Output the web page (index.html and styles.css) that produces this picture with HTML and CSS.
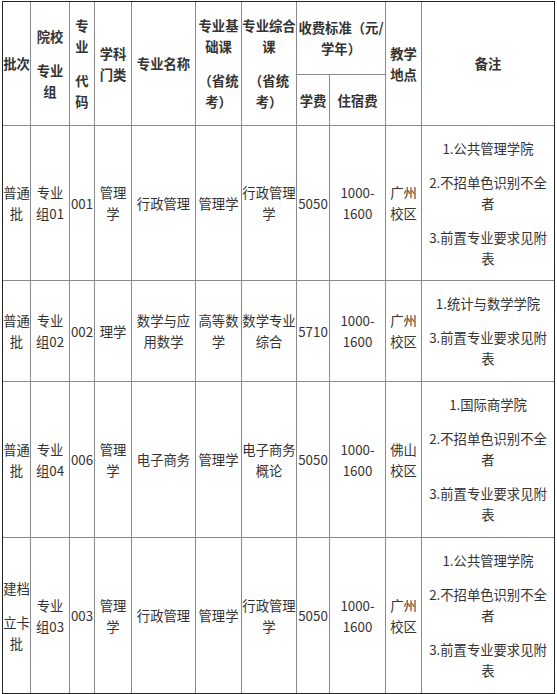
FILE: index.html
```html
<!DOCTYPE html>
<html lang="zh-CN">
<head>
<meta charset="utf-8">
<title>专业组</title>
<link rel="stylesheet" href="styles.css">
</head>
<body>
<div class="wrap">
<table class="plan">
  <colgroup>
    <col class="c1"><col class="c2"><col class="c3"><col class="c4"><col class="c5"><col class="c6"><col class="c7"><col class="c8"><col class="c9"><col class="c10"><col class="c11">
  </colgroup>
  <thead>
    <tr class="h1">
      <th rowspan="2">批次</th>
      <th rowspan="2"><p>院校</p><p>专业组</p></th>
      <th rowspan="2"><p>专业</p><p>代码</p></th>
      <th rowspan="2">学科门类</th>
      <th rowspan="2">专业名称</th>
      <th rowspan="2"><p>专业基础课</p><p>（省统考）</p></th>
      <th rowspan="2"><p>专业综合课</p><p>（省统考）</p></th>
      <th colspan="2">收费标准（元/学年）</th>
      <th rowspan="2">教学地点</th>
      <th rowspan="2" class="last">备注</th>
    </tr>
    <tr class="h2">
      <th>学费</th>
      <th>住宿费</th>
    </tr>
  </thead>
  <tbody>
    <tr class="r1">
      <td>普通批</td>
      <td>专业组01</td>
      <td>001</td>
      <td>管理学</td>
      <td>行政管理</td>
      <td>管理学</td>
      <td>行政管理学</td>
      <td>5050</td>
      <td>1000-1600</td>
      <td>广州校区</td>
      <td class="last note"><p>1.公共管理学院</p><p>2.不招单色识别不全者</p><p>3.前置专业要求见附表</p></td>
    </tr>
    <tr class="r2">
      <td>普通批</td>
      <td>专业组02</td>
      <td>002</td>
      <td>理学</td>
      <td>数学与应用数学</td>
      <td>高等数学</td>
      <td>数学专业综合</td>
      <td>5710</td>
      <td>1000-1600</td>
      <td>广州校区</td>
      <td class="last note"><p>1.统计与数学学院</p><p>3.前置专业要求见附表</p></td>
    </tr>
    <tr class="r3">
      <td>普通批</td>
      <td>专业组04</td>
      <td>006</td>
      <td>管理学</td>
      <td>电子商务</td>
      <td>管理学</td>
      <td>电子商务概论</td>
      <td>5050</td>
      <td>1000-1600</td>
      <td>佛山校区</td>
      <td class="last note"><p>1.国际商学院</p><p>2.不招单色识别不全者</p><p>3.前置专业要求见附表</p></td>
    </tr>
    <tr class="r4 end">
      <td><p>建档</p><p>立卡批</p></td>
      <td>专业组03</td>
      <td>003</td>
      <td>管理学</td>
      <td>行政管理</td>
      <td>管理学</td>
      <td>行政管理学</td>
      <td>5050</td>
      <td>1000-1600</td>
      <td>广州校区</td>
      <td class="last note"><p>1.公共管理学院</p><p>2.不招单色识别不全者</p><p>3.前置专业要求见附表</p></td>
    </tr>
  </tbody>
</table>
</div>
</body>
</html>
```
FILE: styles.css
```css
html, body {
  margin: 0;
  padding: 0;
  background: #ffffff;
}
.wrap {
  padding: 1px 0 0 2px;
}
.plan {
  border-collapse: separate;
  border-spacing: 0;
  table-layout: fixed;
  width: 553px;
  border: 1px solid #222222;
  font-family: "Noto Sans CJK SC", "Noto Sans", sans-serif;
  font-size: 13.33px;
  line-height: 21px;
  color: #333333;
}
.c1 { width: 28px; }
.c2 { width: 39px; }
.c3 { width: 25px; }
.c4 { width: 37px; }
.c5 { width: 64px; }
.c6 { width: 46px; }
.c7 { width: 55px; }
.c8 { width: 33px; }
.c9 { width: 56px; }
.c10 { width: 36px; }
.c11 { width: 132px; }
.plan th, .plan td {
  padding: 0;
  border-right: 1px solid #8a8a8a;
  border-bottom: 1px solid #8a8a8a;
  text-align: center;
  vertical-align: middle;
  overflow: hidden;
}
.plan th {
  font-weight: bold;
}
.plan .last {
  border-right: none;
}
.plan .end td {
  border-bottom: none;
}
.plan p {
  margin: 0;
}
.plan p + p {
  margin-top: 13px;
}
.plan .note {
  padding: 0 6px;
}
.h1 { height: 73px; }
.h2 { height: 51px; }
.r1 { height: 155px; }
.r2 { height: 101px; }
.r3 { height: 156px; }
.r4 { height: 155px; }
```
